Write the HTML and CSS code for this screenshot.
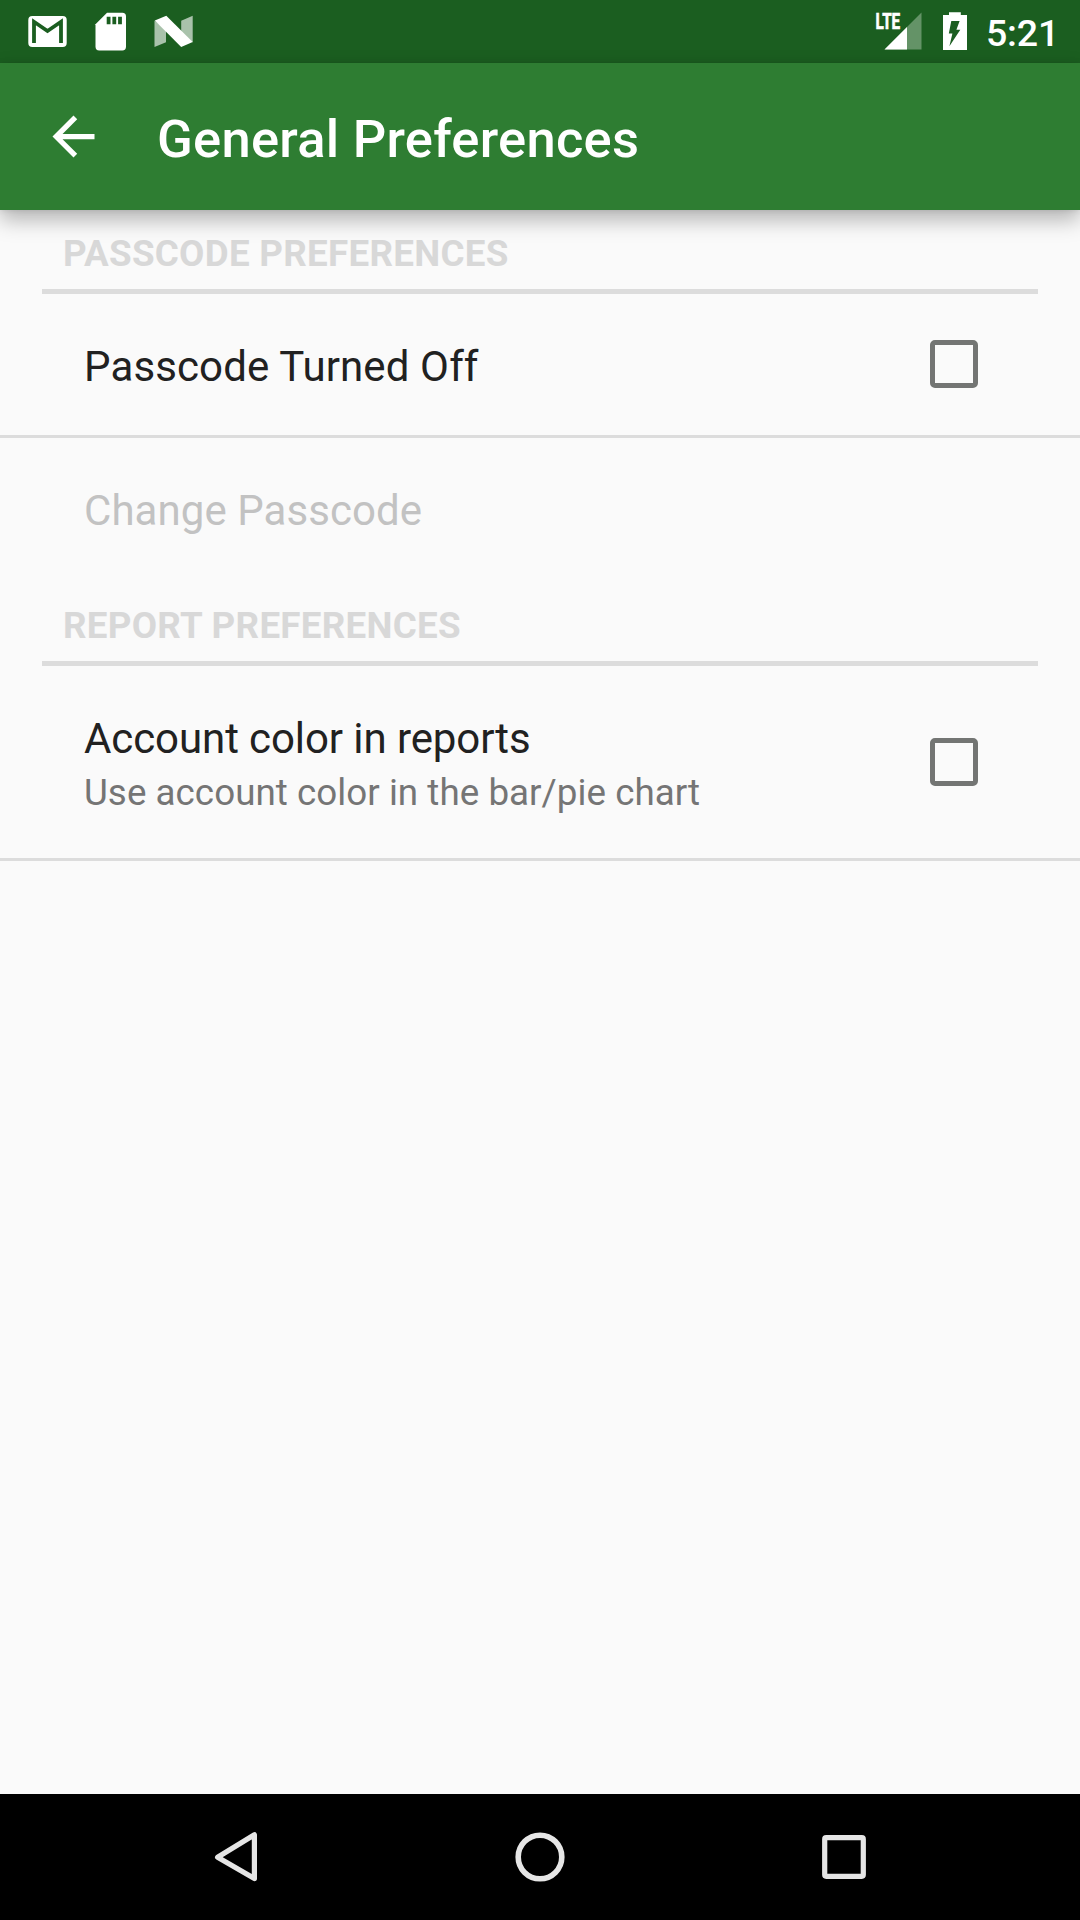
FILE: index.html
```html
<!DOCTYPE html>
<html lang="en">
<head>
<meta charset="utf-8">
<title>General Preferences</title>
<link rel="stylesheet" href="styles.css">
</head>
<body>
<div class="screen">
  <div class="status-bar">
    <svg class="status-icons" width="200" height="63" viewBox="0 0 200 63" aria-hidden="true">
      <rect x="28.3" y="16" width="38.4" height="31" rx="4" fill="#fff"/>
      <path d="M34 43V21.8L47.5 31L61 21.8V43" fill="none" stroke="#1b5e20" stroke-width="3.8"/>
      <path d="M107 12.7H122.3Q126 12.7 126 16.4V46.8Q126 50.5 122.3 50.5H99.2Q95.5 50.5 95.5 46.8V24.2Z" fill="#fff"/>
      <path d="M106.7 16.8h3.8v7.4h-3.8zM112.4 16.8h3.8v7.4h-3.8zM118.1 16.8h3.8v7.4h-3.8z" fill="#1b5e20"/>
      <path d="M154.5 20.5L166 29V42.2L154.5 47ZM181.2 20.8L192.7 15.8V42.4L181.2 34Z" fill="#a9c2ab"/>
      <path d="M154.8 20.6L166.3 15.8L192.7 42.1L181.2 47Z" fill="#fff"/>
    </svg>
    <div class="status-right">
      <svg width="110" height="63" viewBox="870 0 110 63" aria-hidden="true">
        <path d="M921.5 12.5V49.5H884.5Z" fill="#649367"/>
        <path d="M907 27V49.5H884.5Z" fill="#fff"/>
        <path d="M870 8h32v19l-4 4h-28z" fill="#1b5e20"/>
        <text class="network" x="875.6" y="29.3" textLength="24.6" lengthAdjust="spacingAndGlyphs">LTE</text>
        <path d="M949 12.3h11.8v2.7h6.2v34.9h-24V15h6z" fill="#fff"/>
        <path d="M951.3 21H959.6L956.4 29.8H960.3L949.4 46.2L952.4 33.4H948.8Z" fill="#1b5e20"/>
      </svg>
      <span class="clock">5:21</span>
    </div>
  </div>
  <header class="app-bar">
    <svg class="back" width="63" height="63" viewBox="0 0 24 24" aria-hidden="true"><path d="M20 11H7.83l5.59-5.59L12 4l-8 8 8 8 1.41-1.41L7.83 13H20v-2z" fill="#fff"/></svg>
    <h1 class="title">General Preferences</h1>
  </header>
  <main class="list">
    <h2 class="category">PASSCODE PREFERENCES</h2>
    <div class="row">
      <div class="label passcode">Passcode Turned Off</div>
      <span class="checkbox raised"></span>
    </div>
    <div class="row disabled">
      <div class="label">Change Passcode</div>
    </div>
    <h2 class="category">REPORT PREFERENCES</h2>
    <div class="row tall">
      <div class="texts">
        <div class="label">Account color in reports</div>
        <div class="summary">Use account color in the bar/pie chart</div>
      </div>
      <span class="checkbox"></span>
    </div>
  </main>
  <nav class="nav-bar">
    <svg width="56" height="56" viewBox="208 1829 56 56" aria-hidden="true"><path d="M254.4 1834.8V1878.6L217.6 1857.2Z" fill="none" stroke="#e6e6e6" stroke-width="5.2" stroke-linejoin="round"/></svg>
    <svg width="56" height="56" viewBox="512 1829 56 56" aria-hidden="true"><circle cx="540" cy="1857" r="21.8" fill="none" stroke="#e6e6e6" stroke-width="5.6"/></svg>
    <svg width="56" height="56" viewBox="816 1829 56 56" aria-hidden="true"><rect x="824.7" y="1837.7" width="38.6" height="38.6" rx="1.5" fill="none" stroke="#e6e6e6" stroke-width="5.2"/></svg>
  </nav>
</div>
</body>
</html>
```
FILE: styles.css
```css
* { box-sizing: border-box; }

body {
  margin: 0;
  font-family: Roboto, sans-serif;
  background: #fafafa;
}

.screen {
  display: flex;
  flex-direction: column;
  width: 1080px;
  height: 1920px;
  overflow: hidden;
}

.status-bar {
  display: flex;
  justify-content: space-between;
  height: 63px;
  flex: none;
  background: #1b5e20;
}

.status-right {
  display: flex;
  padding-right: 24px;
}

.network {
  font: 700 22.5px Roboto, sans-serif;
  fill: #fff;
  stroke: #fff;
  stroke-width: 0.7px;
}

.clock {
  width: 76px;
  padding: 3px 0 0 6px;
  font-size: 37.5px;
  font-weight: 500;
  line-height: 60px;
  letter-spacing: -0.2px;
  color: #fff;
}

.app-bar {
  display: flex;
  align-items: center;
  flex: none;
  height: 147px;
  padding-left: 42px;
  background: #2e7d32;
  box-shadow: 0 10px 20px rgba(0, 0, 0, 0.28), 0 0 6px rgba(0, 0, 0, 0.1);
  z-index: 1;
}

.title {
  margin: 0;
  padding: 4px 0 0 52px;
  font-size: 52.5px;
  font-weight: 500;
  line-height: 62px;
  letter-spacing: 0.26px;
  color: #fff;
}

.list { flex: 1; }

.category {
  height: 84px;
  margin: 0 42px;
  padding: 22px 21px 0;
  border-bottom: 5px solid #dcdcdc;
  font-size: 36.75px;
  font-weight: 700;
  line-height: 44px;
  letter-spacing: 0.28px;
  color: #d8d8d8;
}

.row {
  display: flex;
  align-items: center;
  justify-content: space-between;
  height: 144px;
  padding: 0 102px 0 84px;
  border-bottom: 3px solid #dcdcdc;
}

.row.disabled { border-color: transparent; }
.row.tall { height: 195px; }

.label {
  padding-top: 4px;
  font-size: 42px;
  line-height: 50px;
  color: #212121;
}

.label.passcode { letter-spacing: 0.13px; }

.disabled .label {
  letter-spacing: 0.06px;
  color: #c2c2c2;
}

.tall .label {
  padding-top: 5px;
  letter-spacing: -0.09px;
}

.summary {
  margin-top: 7px;
  font-size: 36.75px;
  line-height: 44px;
  letter-spacing: 0.04px;
  color: #757575;
}

.checkbox {
  width: 48px;
  height: 48px;
  border: 5px solid #737573;
  border-radius: 5px;
}

.checkbox.raised { margin-bottom: 2px; }

.nav-bar {
  display: flex;
  justify-content: center;
  gap: 248px;
  align-items: center;
  flex: none;
  height: 126px;
  background: #000;
}
```
